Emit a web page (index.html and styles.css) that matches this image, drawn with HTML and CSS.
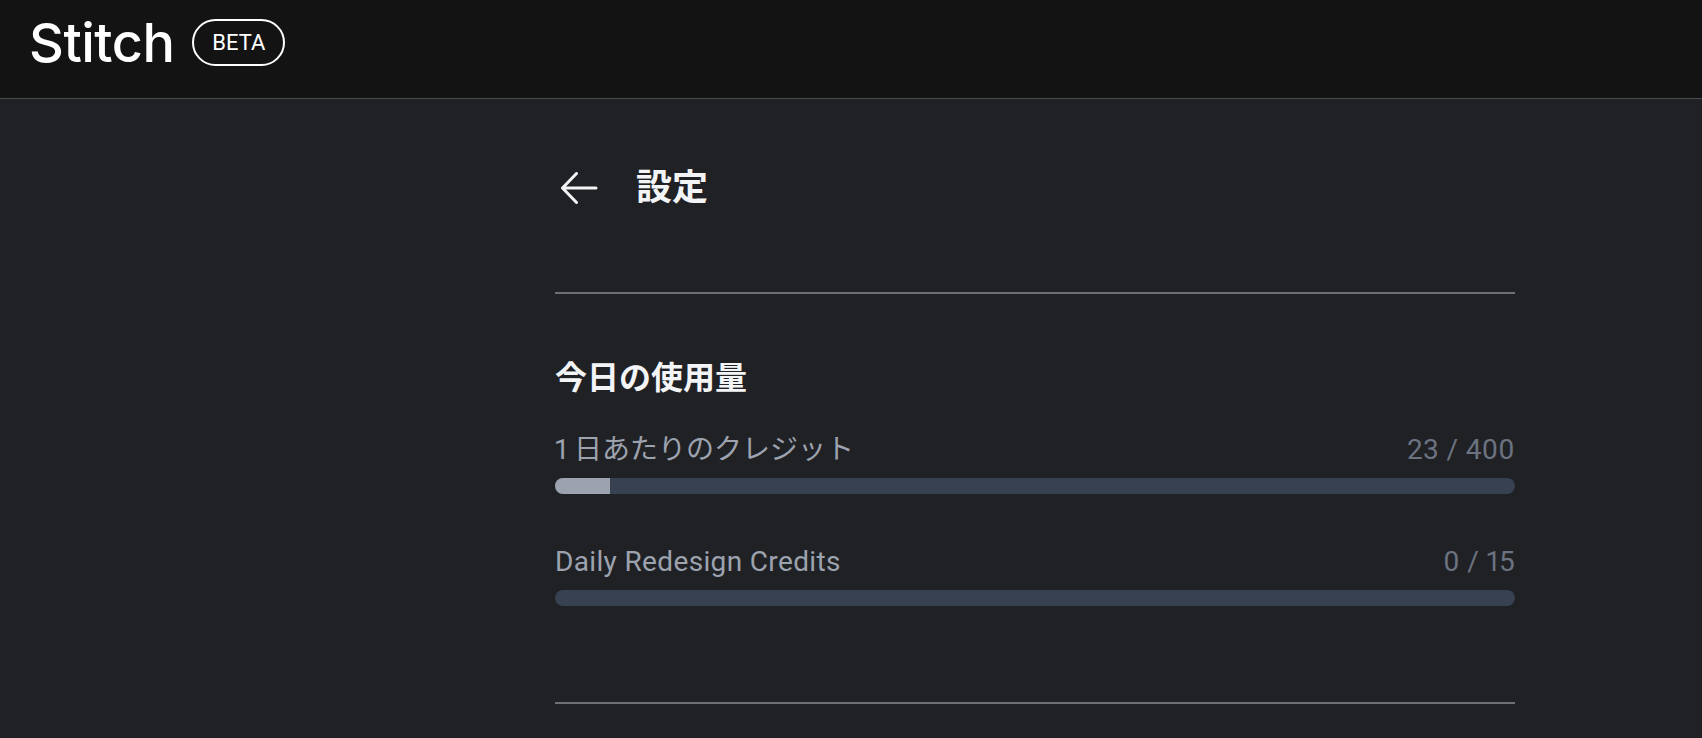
FILE: index.html
```html
<!DOCTYPE html>
<html lang="ja">

<head>
    <meta charset="UTF-8">
    <meta name="viewport" content="width=device-width, initial-scale=1.0">
    <title>Stitch</title>
    <link rel="stylesheet" href="styles.css">
</head>

<body>
    <header class="topbar">
        <span class="logo">Stitch</span>
        <span class="beta">BETA</span>
    </header>
    <main class="main">
        <div class="page-title">
            <svg class="back" viewBox="0 0 38 32" width="38" height="32" fill="none">
                <path d="M36 16H2.500M16.500 1.500 2.500 16l14 14.500" stroke="#f3f4f6" stroke-width="3" stroke-linecap="round" stroke-linejoin="round" />
            </svg>
            <h1>設定</h1>
        </div>
        <hr class="rule">
        <section class="usage">
            <h2>今日の使用量</h2>
            <div class="meter">
                <div class="meter-head">
                    <span class="meter-label cjk">1 日あたりのクレジット</span>
                    <span class="meter-count">23 / 400</span>
                </div>
                <div class="track">
                    <div class="fill" style="width: 5.750%"></div>
                </div>
            </div>
            <div class="meter">
                <div class="meter-head">
                    <span class="meter-label">Daily Redesign Credits</span>
                    <span class="meter-count">0 / 15</span>
                </div>
                <div class="track">
                    <div class="fill" style="width: 0%"></div>
                </div>
            </div>
        </section>
        <hr class="rule">
    </main>
</body>

</html>
```

FILE: styles.css
```css
* {
    box-sizing: border-box;
}

body {
    margin: 0;
    height: 738px;
    overflow: hidden;
    background-color: #202125;
    color: #f3f4f6;
    font-family: Roboto, "Noto Sans CJK JP", sans-serif;
}

.topbar {
    height: 99px;
    padding: 19px 0 0 29px;
    display: flex;
    align-items: flex-start;
    gap: 18px;
    background-color: #141314;
    border-bottom: 1px solid #4a4c50;
}

.logo {
    font-family: Inter, Roboto, sans-serif;
    font-size: 54px;
    line-height: 48px;
    font-weight: 500;
    letter-spacing: -0.5px;
    font-variant-ligatures: none;
    color: #ffffff;
}

.beta {
    width: 93px;
    height: 47px;
    border: 2px solid #ffffff;
    border-radius: 24px;
    display: flex;
    align-items: center;
    justify-content: center;
    font-size: 22px;
    color: #ffffff;
}

.main {
    width: 960px;
    margin-left: 555px;
}

.page-title {
    height: 193px;
    padding-top: 73px;
    display: flex;
    align-items: flex-start;
}

.back {
    margin: 0 0 0 5px;
}

.page-title h1 {
    margin: -6px 0 0 38px;
    font-size: 36px;
    line-height: 44px;
    font-weight: 700;
}

.rule {
    margin: 0;
    border: 0;
    height: 2px;
    background-color: #6f7074;
}

.usage {
    height: 408px;
    padding-top: 63px;
}

.usage h2 {
    margin: 0 0 29px;
    font-size: 32px;
    line-height: 42px;
    font-weight: 700;
}

.meter {
    margin-bottom: 46px;
}

.meter-head {
    display: flex;
    justify-content: space-between;
    align-items: center;
    height: 38px;
    padding-top: 4px;
    margin-bottom: 12px;
    font-size: 28px;
    letter-spacing: 0.35px;
    font-variant-numeric: proportional-nums;
}

.meter-label {
    color: #9ca3af;
}

.meter-label.cjk {
    margin-bottom: 4px;
    letter-spacing: 0;
}

.meter-count {
    color: #6b7280;
}

.track {
    height: 16px;
    border-radius: 8px;
    background-color: #374151;
    overflow: hidden;
}

.fill {
    height: 100%;
    background-color: #9ca3af;
}
```
